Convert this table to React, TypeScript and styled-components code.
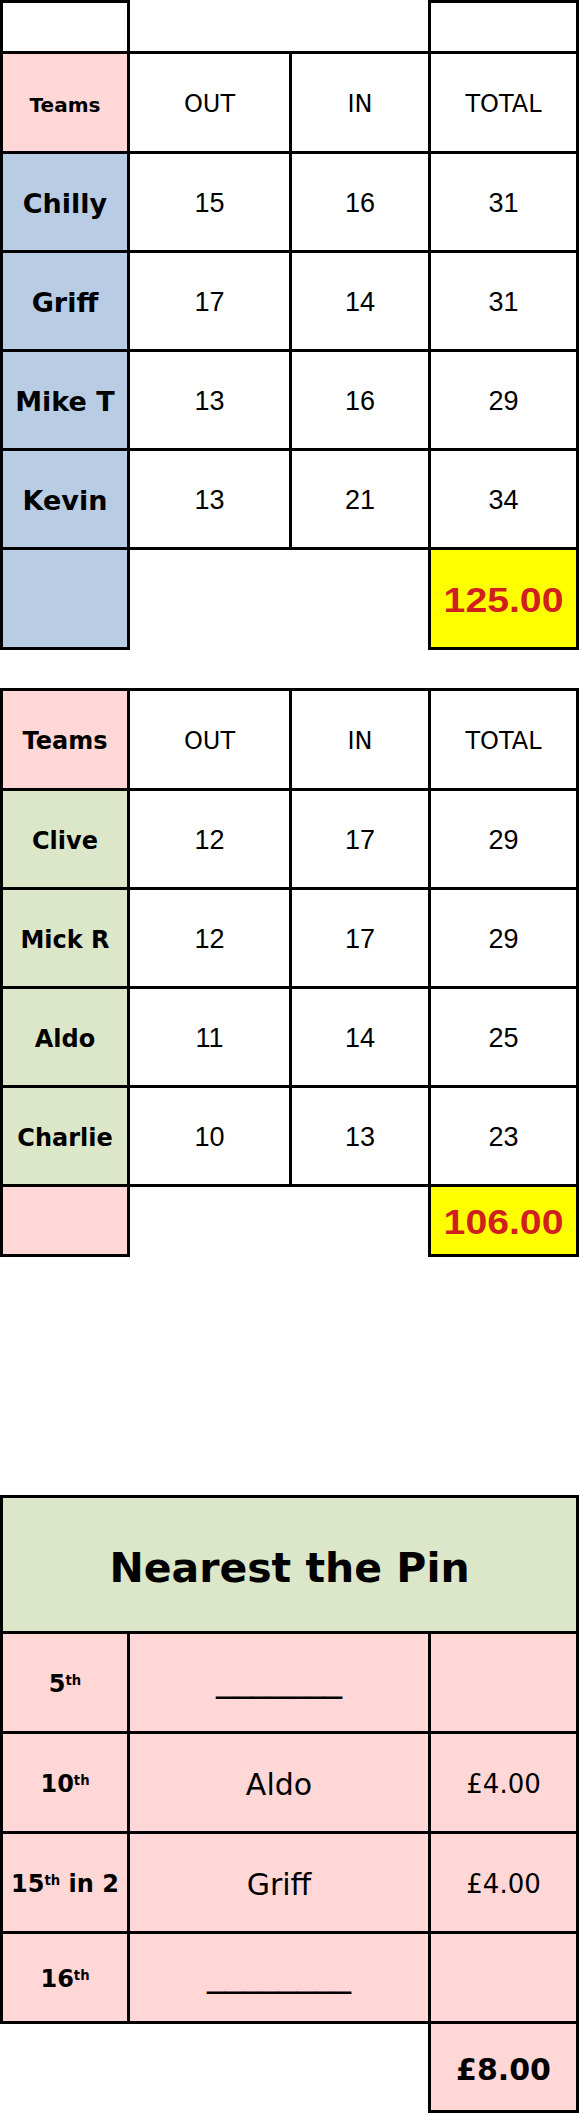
import React from "react";
import styled, { createGlobalStyle } from "styled-components";

const COMIC = `"Comic Sans MS", "DejaVu Sans", sans-serif`;
const ARIAL = `"Liberation Sans", Arial, sans-serif`;

const Global = createGlobalStyle`
  html, body { margin: 0; padding: 0; background: #ffffff; }
  body { font-family: ${COMIC}; color: #000; }
`;

const Page = styled.div`
  width: 579px;
  display: flex;
  flex-direction: column;
`;

const Sheet = styled.table<{ $gap?: number }>`
  border-collapse: collapse;
  table-layout: fixed;
  width: 576px;
  margin-bottom: ${(p) => p.$gap ?? 0}px;
`;

const Row = styled.tr<{ $h: number }>`
  height: ${(p) => p.$h}px;
`;

const Cell = styled.td<{ $bg?: string; $open?: boolean; $drop?: number }>`
  border: ${(p) => (p.$open ? "none" : "3px solid #000")};
  background: ${(p) => p.$bg ?? "transparent"};
  text-align: center;
  vertical-align: middle;
  padding: ${(p) => p.$drop ?? 4}px 0 0;
  line-height: 1.1;
`;

const Name = styled.span<{ $size: number }>`
  font-family: ${COMIC};
  font-weight: bold;
  font-size: ${(p) => p.$size}px;
`;

const Head = styled.span`
  font-family: ${COMIC};
  font-size: 24px;
`;

const Num = styled.span`
  font-family: ${ARIAL};
  font-size: 27px;
`;

const Total = styled.span`
  display: inline-block;
  font-family: ${ARIAL};
  font-weight: bold;
  font-size: 35px;
  color: #d01f1f;
  transform: scaleX(1.12);
`;

const Title = styled.span`
  font-family: ${COMIC};
  font-weight: bold;
  font-size: 41px;
`;

const Plain = styled.span<{ $size: number; $bold?: boolean }>`
  font-family: ${COMIC};
  font-size: ${(p) => p.$size}px;
  font-weight: ${(p) => (p.$bold ? "bold" : "normal")};
`;

const Blank = styled.span`
  font-family: ${COMIC};
  font-size: 36px;
  position: relative;
  top: -6px;
`;

const Sup = styled.sup`
  font-size: 0.55em;
  vertical-align: 0.55em;
  line-height: 0;
`;

const PINK = "#ffd7d7";
const BLUE = "#b8cce4";
const GREEN = "#dce6c9";
const YELLOW = "#ffff00";

type Score = { name: string; out: number; inn: number; total: number };

const team1: Score[] = [
  { name: "Chilly", out: 15, inn: 16, total: 31 },
  { name: "Griff", out: 17, inn: 14, total: 31 },
  { name: "Mike T", out: 13, inn: 16, total: 29 },
  { name: "Kevin", out: 13, inn: 21, total: 34 },
];

const team2: Score[] = [
  { name: "Clive", out: 12, inn: 17, total: 29 },
  { name: "Mick R", out: 12, inn: 17, total: 29 },
  { name: "Aldo", out: 11, inn: 14, total: 25 },
  { name: "Charlie", out: 10, inn: 13, total: 23 },
];

const Cols = () => (
  <colgroup>
    <col style={{ width: 127 }} />
    <col style={{ width: 162 }} />
    <col style={{ width: 139 }} />
    <col style={{ width: 148 }} />
  </colgroup>
);

const HeaderRow = ({ teamsSize }: { teamsSize: number }) => (
  <Row $h={100}>
    <Cell $bg={PINK}>
      <Name $size={teamsSize}>Teams</Name>
    </Cell>
    <Cell>
      <Head>OUT</Head>
    </Cell>
    <Cell>
      <Head>IN</Head>
    </Cell>
    <Cell>
      <Head>TOTAL</Head>
    </Cell>
  </Row>
);

const ScoreRows = ({ rows, bg, size }: { rows: Score[]; bg: string; size: number }) => (
  <>
    {rows.map((r) => (
      <Row $h={99} key={r.name}>
        <Cell $bg={bg}>
          <Name $size={size}>{r.name}</Name>
        </Cell>
        <Cell>
          <Num>{r.out}</Num>
        </Cell>
        <Cell>
          <Num>{r.inn}</Num>
        </Cell>
        <Cell>
          <Num>{r.total}</Num>
        </Cell>
      </Row>
    ))}
  </>
);

type Pin = { hole: string; suffix?: string; name?: string; blank?: string; prize?: string };

const pins: Pin[] = [
  { hole: "5", blank: "_______" },
  { hole: "10", name: "Aldo", prize: "£4.00" },
  { hole: "15", suffix: " in 2", name: "Griff", prize: "£4.00" },
  { hole: "16", blank: "________" },
];

export default function App() {
  return (
    <Page>
      <Global />
      <Sheet $gap={38}>
        <Cols />
        <tbody>
          <Row $h={51}>
            <Cell />
            <Cell colSpan={2} $open />
            <Cell />
          </Row>
          <HeaderRow teamsSize={20} />
          <ScoreRows rows={team1} bg={BLUE} size={27} />
          <Row $h={100}>
            <Cell $bg={BLUE} />
            <Cell colSpan={2} $open />
            <Cell $bg={YELLOW}>
              <Total>125.00</Total>
            </Cell>
          </Row>
        </tbody>
      </Sheet>

      <Sheet $gap={238}>
        <Cols />
        <tbody>
          <HeaderRow teamsSize={24} />
          <ScoreRows rows={team2} bg={GREEN} size={24} />
          <Row $h={70}>
            <Cell $bg={PINK} />
            <Cell colSpan={2} $open />
            <Cell $bg={YELLOW}>
              <Total>106.00</Total>
            </Cell>
          </Row>
        </tbody>
      </Sheet>

      <Sheet>
        <colgroup>
          <col style={{ width: 127 }} />
          <col style={{ width: 301 }} />
          <col style={{ width: 148 }} />
        </colgroup>
        <tbody>
          <Row $h={136}>
            <Cell colSpan={3} $bg={GREEN} $drop={8}>
              <Title>Nearest the Pin</Title>
            </Cell>
          </Row>
          {pins.map((p, i) => (
            <Row $h={i === 3 ? 90 : 100} key={p.hole}>
              <Cell $bg={PINK}>
                <Plain $size={24} $bold>
                  {p.hole}
                  <Sup>th</Sup>
                  {p.suffix}
                </Plain>
              </Cell>
              <Cell $bg={PINK}>
                {p.blank ? <Blank>{p.blank}</Blank> : <Plain $size={30}>{p.name}</Plain>}
              </Cell>
              <Cell $bg={PINK}>{p.prize && <Plain $size={26}>{p.prize}</Plain>}</Cell>
            </Row>
          ))}
          <Row $h={89}>
            <Cell colSpan={2} $open />
            <Cell $bg={PINK}>
              <Plain $size={30} $bold>
                £8.00
              </Plain>
            </Cell>
          </Row>
        </tbody>
      </Sheet>
    </Page>
  );
}
